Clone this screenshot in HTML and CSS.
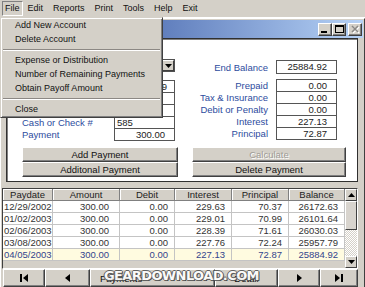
FILE: index.html
```html
<!DOCTYPE html>
<html lang="en">
<head>
    <meta charset="UTF-8">
    <meta name="viewport" content="width=device-width, initial-scale=1.0">
    <title>Loan Payments</title>
    <link rel="stylesheet" href="styles.css">
</head>
<body>
    <!-- Main menu -->
    <div class="menubar">
        <span class="menu-item open">File</span>
        <span class="menu-item">Edit</span>
        <span class="menu-item">Reports</span>
        <span class="menu-item">Print</span>
        <span class="menu-item">Tools</span>
        <span class="menu-item">Help</span>
        <span class="menu-item">Exit</span>
    </div>

    <!-- MDI child window -->
    <div class="child">
        <div class="titlebar">
            <span class="tbtn">
                <svg width="12" height="11" viewBox="0 0 12 11"><rect x="2" y="7" width="6" height="2" fill="#000"/></svg>
            </span>
            <span class="tbtn">
                <svg width="12" height="11" viewBox="0 0 12 11"><rect x="2.5" y="1.5" width="8" height="7" fill="none" stroke="#000"/><rect x="2" y="1" width="9" height="2" fill="#000"/></svg>
            </span>
            <span class="tbtn close">
                <svg width="12" height="11" viewBox="0 0 12 11"><path d="M3 2 L9 8 M9 2 L3 8" stroke="#fff" stroke-width="1.5" transform="translate(1 1)"/><path d="M3 2 L9 8 M9 2 L3 8" stroke="#8a8884" stroke-width="1.5"/></svg>
            </span>
        </div>

        <div class="client">
            <div class="panel">
                <div class="form">
                    <div class="col-left">
                        <div class="combo"><span class="combo-arrow">
                            <svg width="7" height="4" viewBox="0 0 7 4"><polygon points="0,0 7,0 3.5,4" fill="#000"/></svg>
                        </span></div>
                        <!-- the first three rows sit under the open menu -->
                        <div class="fields">
                            <div class="field"><span class="label"></span><span class="box num tight">26472.89</span></div>
                            <div class="field"><span class="label"></span><span class="box num"></span></div>
                            <div class="field"><span class="label"></span><span class="box"></span></div>
                            <div class="field"><span class="label">Cash or Check #</span><span class="box">585</span></div>
                            <div class="field"><span class="label">Payment</span><span class="box num">300.00</span></div>
                        </div>
                    </div>

                    <div class="col-right">
                        <div class="field big"><span class="label">End Balance</span><span class="box num">25884.92</span></div>
                        <div class="fields right">
                            <div class="field"><span class="label">Prepaid</span><span class="box num">0.00</span></div>
                            <div class="field"><span class="label">Tax &amp; Insurance</span><span class="box num">0.00</span></div>
                            <div class="field"><span class="label">Debit or Penalty</span><span class="box num">0.00</span></div>
                            <div class="field"><span class="label">Interest</span><span class="box num">227.13</span></div>
                            <div class="field"><span class="label">Principal</span><span class="box num">72.87</span></div>
                        </div>
                    </div>

                    <div class="btn-stack">
                        <button class="btn">Add Payment</button>
                        <button class="btn">Additonal Payment</button>
                    </div>
                    <div class="btn-stack">
                        <button class="btn" disabled>Calculate</button>
                        <button class="btn">Delete Payment</button>
                    </div>
                </div>
            </div>

            <!-- Payment grid -->
            <div class="grid">
                <div class="table">
                    <div class="row head">
                        <span>Paydate</span><span>Amount</span><span>Debit</span><span>Interest</span><span>Principal</span><span>Balance</span>
                    </div>
                    <div class="row">
                        <span class="date">12/29/2002</span><span class="amt">300.00</span><span>0.00</span><span>229.63</span><span>70.37</span><span>26172.63</span>
                    </div>
                    <div class="row">
                        <span class="date">01/02/2003</span><span class="amt">300.00</span><span>0.00</span><span>229.01</span><span>70.99</span><span>26101.64</span>
                    </div>
                    <div class="row">
                        <span class="date">02/06/2003</span><span class="amt">300.00</span><span>0.00</span><span>228.39</span><span>71.61</span><span>26030.03</span>
                    </div>
                    <div class="row">
                        <span class="date">03/08/2003</span><span class="amt">300.00</span><span>0.00</span><span>227.76</span><span>72.24</span><span>25957.79</span>
                    </div>
                    <div class="row current">
                        <span class="date">04/05/2003</span><span class="amt">300.00</span><span>0.00</span><span>227.13</span><span>72.87</span><span>25884.92</span>
                    </div>
                </div>
                <div class="vscroll">
                    <span class="sbtn">
                        <svg width="7" height="4" viewBox="0 0 7 4"><polygon points="0,4 7,4 3.5,0" fill="#000"/></svg>
                    </span>
                    <span class="thumb"></span>
                    <span class="track"></span>
                    <span class="sbtn">
                        <svg width="7" height="4" viewBox="0 0 7 4"><polygon points="0,0 7,0 3.5,4" fill="#000"/></svg>
                    </span>
                </div>
            </div>

            <div class="navbar">
                <span class="nbtn w42"><svg width="8" height="8" viewBox="0 0 8 8"><rect x="0" y="0" width="2" height="8"/><polygon points="8,0 8,8 3,4"/></svg></span>
                <span class="nbtn w45"><svg width="8" height="8" viewBox="0 0 8 8"><polygon points="6,0 6,8 1,4"/></svg></span>
                <span class="nbtn w125 text-left">Payments</span>
                <span class="nbtn w63">Detail</span>
                <span class="nbtn w42"><svg width="8" height="8" viewBox="0 0 8 8"><polygon points="2,0 2,8 7,4"/></svg></span>
                <span class="nbtn w38"><svg width="8" height="8" viewBox="0 0 8 8"><polygon points="0,0 0,8 5,4"/><rect x="6" y="0" width="2" height="8"/></svg></span>
            </div>
        </div>
    </div>

    <!-- Open File menu -->
    <div class="dropdown">
        <div class="dd-item">Add New Account</div>
        <div class="dd-item">Delete Account</div>
        <div class="dd-sep"></div>
        <div class="dd-item">Expense or Distribution</div>
        <div class="dd-item">Number of Remaining Payments</div>
        <div class="dd-item">Obtain Payoff Amount</div>
        <div class="dd-sep"></div>
        <div class="dd-item">Close</div>
    </div>

    <div class="watermark">GEARDOWNLOAD.COM</div>
</body>
</html>
```

FILE: styles.css
```css
* {
    box-sizing: border-box;
}
body {
    margin: 0;
    width: 365px;
    height: 287px;
    overflow: hidden;
    position: relative;
    background-color: #d4d0c8;
    font-family: "Liberation Sans", Arial, sans-serif;
    font-size: 9.5px;
    color: #222;
}
/* Menu bar */
.menubar {
    height: 18px;
    display: flex;
    align-items: center;
    font-size: 9px;
    color: #111;
    border-bottom: 1px solid #fff;
}
.menu-item {
    padding: 0 5px;
    line-height: 11px;
}
.menu-item.open {
    margin-left: 2px;
    padding: 1px 2px;
    border: 1px solid;
    border-color: #808080 #fff #fff #808080;
}
/* Child window */
.child {
    height: 272px;
    border: 1px solid;
    border-color: #fff #404040 #404040 #fff;
    padding: 1px;
}
.titlebar {
    height: 18px;
    display: flex;
    justify-content: flex-end;
    align-items: center;
    padding-right: 1px;
    background: linear-gradient(to right, #1c3c90, #b6d2f6);
}
.tbtn {
    width: 14px;
    height: 13px;
    display: flex;
    align-items: center;
    justify-content: center;
    background-color: #d4d0c8;
    border: 1px solid;
    border-color: #fff #404040 #404040 #fff;
    box-shadow: inset -1px -1px #808080;
}
.tbtn.close {
    margin-left: 2px;
}
.client {
    display: flex;
    flex-direction: column;
}
/* Form panel */
.panel {
    margin: 0 5px 0 4px;
    background: #fff;
    border: 1px solid #303030;
    box-shadow: inset 1px 1px #808080;
}
.form {
    display: grid;
    grid-template-columns: 156px 154px;
    column-gap: 14px;
    row-gap: 6px;
    padding: 0 0 4px 15px;
}
.col-left {
    padding-top: 20px;
}
.col-right {
    padding-top: 21px;
}
.combo {
    width: 153px;
    height: 13px;
    display: flex;
    justify-content: flex-end;
    border: 1px solid #505050;
    background: #fff;
}
.combo-arrow {
    width: 12px;
    display: flex;
    align-items: center;
    justify-content: center;
    background: #d4d0c8;
    border: 1px solid;
    border-color: #fff #404040 #404040 #fff;
}
.fields {
    margin-top: 8px;
}
.fields.right {
    margin-top: 5px;
}
.field {
    display: flex;
    align-items: center;
    height: 13px;
    margin-top: -1px;
}
.field:first-child {
    margin-top: 0;
}
.field.big {
    height: 14px;
}
.label {
    width: 92px;
    color: #2d4c9e;
}
.col-right .label {
    width: 84px;
    padding-right: 8px;
    text-align: right;
}
.box {
    width: 61px;
    height: 100%;
    border: 1px solid #555;
    background: #fff;
    padding: 0 9px 0 2px;
    line-height: 11px;
    white-space: nowrap;
    overflow: hidden;
}
.field.big .box {
    line-height: 12px;
}
.box.num {
    text-align: right;
}
.box.tight {
    padding-right: 7px;
}
.btn-stack {
    display: flex;
    flex-direction: column;
}
.btn {
    height: 15px;
    padding: 0;
    font-family: inherit;
    font-size: 9.5px;
    line-height: 12px;
    color: #111;
    background-color: #d4d0c8;
    border: 1px solid;
    border-color: #fff #404040 #404040 #fff;
    box-shadow: inset -1px -1px #808080;
}
.btn:disabled {
    color: #a09c96;
    text-shadow: 1px 1px #fff;
}
/* Grid */
.grid {
    height: 81px;
    margin: 6px 5px 0 0;
    display: flex;
    border: 1px solid;
    border-color: #404040 #fff #fff #404040;
}
.table {
    width: 342px;
}
.row {
    display: grid;
    grid-template-columns: 50px 67px 55px 57px 57px 56px;
    height: 12px;
    background: #fff;
}
.row span {
    border-right: 1px solid #c4c4c4;
    border-bottom: 1px solid #c4c4c4;
    line-height: 11px;
    text-align: right;
    padding-right: 6px;
    color: #333;
    white-space: nowrap;
}
.row span.date {
    text-align: left;
    padding: 0 0 0 1px;
}
.row span.amt {
    padding-right: 10px;
}
.row.head span {
    background: #d4d0c8;
    text-align: center;
    padding: 0;
    color: #222;
    border-right-color: #808080;
    border-bottom-color: #808080;
    box-shadow: inset 1px 1px #fff;
}
.row.current {
    background: #fffbe0;
}
.row.current span {
    color: #33448c;
}
.vscroll {
    width: 12px;
    display: flex;
    flex-direction: column;
}
.sbtn {
    height: 12px;
    display: flex;
    align-items: center;
    justify-content: center;
    background: #d4d0c8;
    border: 1px solid;
    border-color: #fff #404040 #404040 #fff;
}
.thumb {
    height: 29px;
    background: #d8d4ce;
    border: 1px solid;
    border-color: #fff #404040 #404040 #fff;
}
.track {
    flex: 1;
    background: repeating-conic-gradient(#fff 0 25%, #d4d0c8 0 50%) 0 0 / 2px 2px;
}
/* Record navigator */
.navbar {
    display: flex;
    height: 18px;
    margin: 0 5px 0 1px;
}
.nbtn {
    display: flex;
    align-items: center;
    justify-content: center;
    background: #d4d0c8;
    border: 1px solid;
    border-color: #fff #404040 #404040 #fff;
    box-shadow: inset -1px -1px #808080;
    color: #111;
}
.nbtn svg {
    fill: #000;
}
.nbtn.text-left {
    justify-content: flex-start;
    padding-left: 9px;
}
.w42 { width: 42px; }
.w45 { width: 45px; }
.w125 { width: 125px; }
.w63 { width: 63px; }
.w38 { width: 38px; }
/* Dropdown menu */
.dropdown {
    position: absolute;
    left: 0;
    top: 17px;
    width: 163px;
    height: 101px;
    padding: 0 2px 1px 2px;
    background: #d4d0c8;
    border: 1px solid;
    border-color: #d4d0c8 #404040 #404040 #d4d0c8;
    box-shadow: inset 1px 1px #fff, inset -1px -1px #808080;
    font-size: 9px;
    color: #111;
}
.dd-item {
    height: 14px;
    line-height: 14px;
    padding-left: 12px;
    white-space: nowrap;
}
.dd-sep {
    height: 7px;
    padding-top: 3px;
}
.dd-sep::after {
    content: "";
    display: block;
    border-top: 1px solid #8c8884;
    border-bottom: 1px solid #fff;
}
.watermark {
    position: absolute;
    left: 104px;
    top: 268px;
    font-family: "DejaVu Sans", sans-serif;
    font-weight: bold;
    font-size: 13px;
    letter-spacing: -0.6px;
    color: #fff;
    opacity: 0.9;
    text-shadow: 1px 0 #555, -1px 0 #555, 0 1px #555, 0 -1px #555, 1px 1px #333;
}
```
